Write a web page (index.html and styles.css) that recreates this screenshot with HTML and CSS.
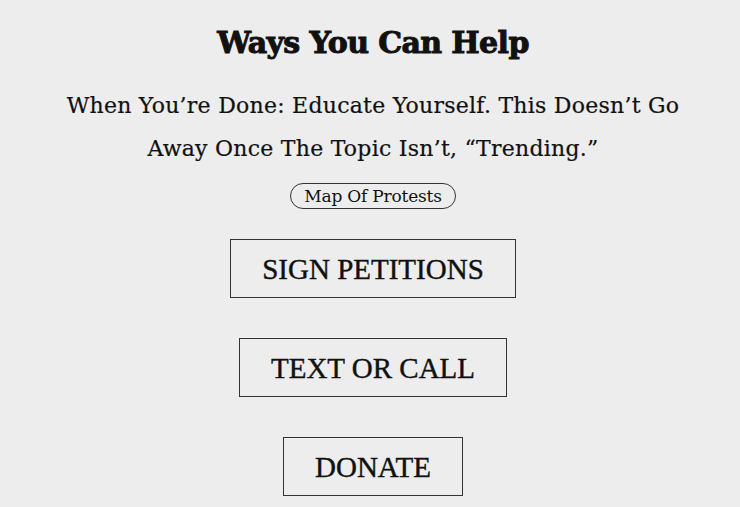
FILE: index.html
```html
<!DOCTYPE html>
<html>
<head>
<meta charset="utf-8">
<link rel="stylesheet" href="styles.css">
</head>
<body>
<main class="help">
  <h1 class="title">Ways You Can Help</h1>
  <p class="subtitle">When You’re Done: Educate Yourself. This Doesn’t Go Away Once The Topic Isn’t, “Trending.”</p>
  <a class="pill" href="#">Map Of Protests</a>
  <div class="actions">
    <a class="action" href="#">SIGN PETITIONS</a>
    <a class="action" href="#">TEXT OR CALL</a>
    <a class="action" href="#">DONATE</a>
  </div>
</main>
</body>
</html>
```

FILE: styles.css
```css
html, body {
  margin: 0;
  padding: 0;
  background: #ededed;
}
.help {
  display: flex;
  flex-direction: column;
  align-items: center;
  padding: 23px 0 0 6px;
  color: #111;
}
.title {
  margin: 0;
  font-family: "DejaVu Serif", serif;
  font-weight: 900;
  font-size: 30px;
  line-height: 40px;
  letter-spacing: -0.6px;
  -webkit-text-stroke: 1px #111;
}
.subtitle {
  margin: 21px 0 0;
  width: 640px;
  text-align: center;
  font-family: "DejaVu Serif", serif;
  font-size: 22px;
  line-height: 43px;
  letter-spacing: 0.25px;
  -webkit-text-stroke: 0.2px #111;
}
.pill {
  margin-top: 13px;
  display: inline-block;
  padding: 0 13px;
  height: 24px;
  line-height: 25px;
  border: 1px solid #333;
  border-radius: 13px;
  font-family: "DejaVu Serif", serif;
  font-size: 17px;
  letter-spacing: -0.2px;
  color: #111;
  text-decoration: none;
}
.actions {
  margin-top: 30px;
  display: flex;
  flex-direction: column;
  align-items: center;
  gap: 40px;
}
.action {
  display: block;
  height: 57px;
  line-height: 59px;
  padding: 0 31px;
  border: 1px solid #333;
  font-family: "Liberation Serif", serif;
  font-size: 29px;
  letter-spacing: 0;
  -webkit-text-stroke: 0.4px #111;
  color: #111;
  text-decoration: none;
}
```
